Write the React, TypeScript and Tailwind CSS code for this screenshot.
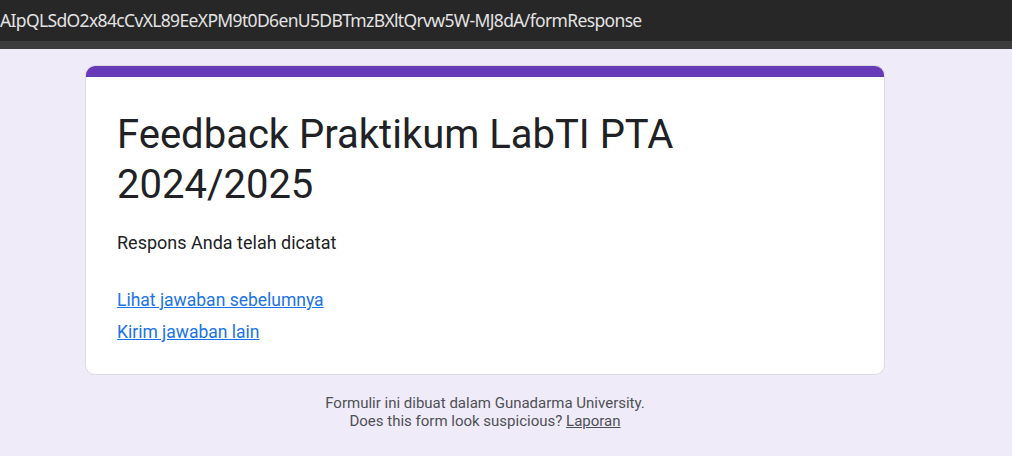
import React from "react";

function App() {
  return (
    <div className="w-[1012px] h-[456px] overflow-hidden bg-[#f0ebf8] font-['Roboto',sans-serif]">
      {/* address bar */}
      <div className="h-[41px] bg-[#272727] flex items-center">
        <span className="whitespace-nowrap text-[17.5px] tracking-[-0.65px] text-[#e3e3e3] font-['Noto_Sans',sans-serif]">
          AIpQLSdO2x84cCvXL89EeXPM9t0D6enU5DBTmzBXltQrvw5W-MJ8dA/formResponse
        </span>
      </div>
      <div className="h-[8px] bg-[#3c3c3c]"></div>

      <div className="w-[970px] flex flex-col items-center pt-[16px]">
        <div className="w-[800px] bg-white rounded-[10px] border border-[#dadce0] overflow-hidden">
          <div className="h-[12px] bg-[#673ab7] -mx-px -mt-px"></div>
          <div className="px-[31px] pt-[33px] pb-[29px]">
            <h1 className="text-[40px] leading-[50px] text-[#202124] font-normal">
              Feedback Praktikum LabTI PTA 2024/2025
            </h1>
            <p className="mt-[20px] text-[18px] leading-[25px] text-[#202124]">
              Respons Anda telah dicatat
            </p>
            <div className="mt-[33px] flex flex-col gap-[7px] text-[17.5px] leading-[25px]">
              <a className="text-[#1a73e8] underline self-start" href="#">
                Lihat jawaban sebelumnya
              </a>
              <a className="text-[#1a73e8] underline self-start" href="#">
                Kirim jawaban lain
              </a>
            </div>
          </div>
        </div>

        <div className="mt-[20px] text-center text-[15px] leading-[17.5px] text-[#4d5156]">
          <p>Formulir ini dibuat dalam Gunadarma University.</p>
          <p>
            Does this form look suspicious?{" "}
            <a className="underline" href="#">
              Laporan
            </a>
          </p>
        </div>
      </div>
    </div>
  );
}

export default App;
